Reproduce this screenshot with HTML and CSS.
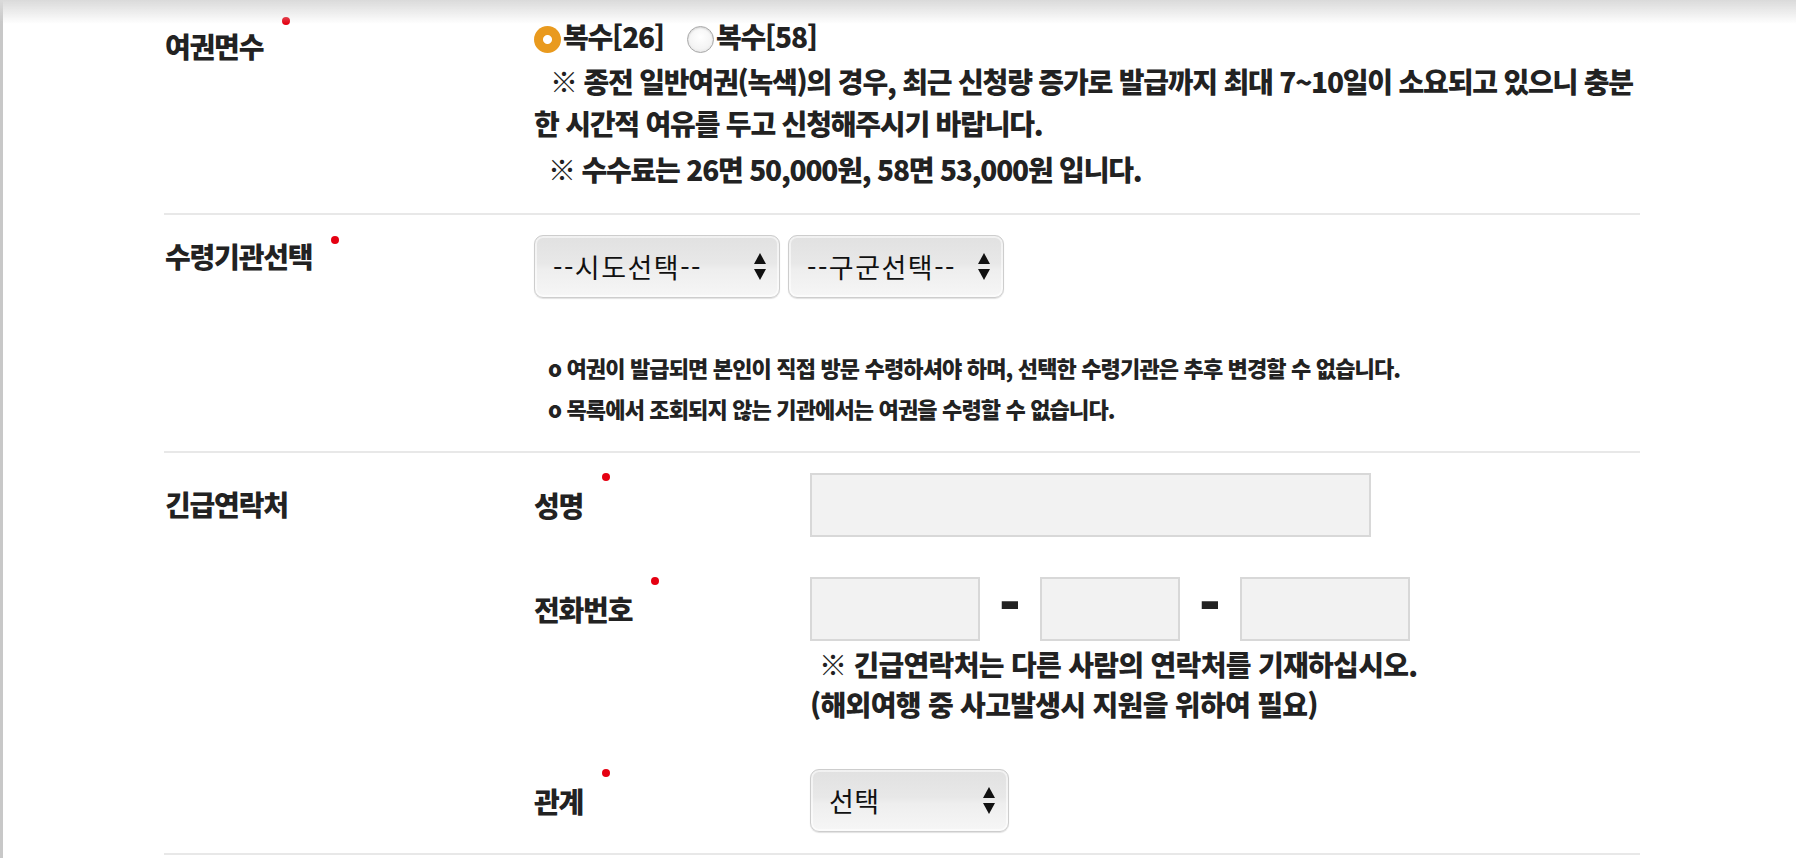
FILE: index.html
```html
<!DOCTYPE html>
<html lang="ko">
<head>
<meta charset="utf-8">
<title>여권 신청</title>
<link rel="stylesheet" href="styles.css">
</head>
<body>
<div class="topshade"></div>
<div class="page">
  <div class="form">
    <div class="row row-count">
      <div class="label"><span class="req req-count">여권면수</span></div>
      <div class="content">
        <div class="radios">
          <label class="radio"><input type="radio" name="cnt" checked><span>복수[26]</span></label>
          <label class="radio"><input type="radio" name="cnt"><span>복수[58]</span></label>
        </div>
        <p class="notice first">※ 종전 일반여권(녹색)의 경우, 최근 신청량 증가로 발급까지 최대 7~10일이 소요되고 있으니 충분<br>한 시간적 여유를 두고 신청해주시기 바랍니다.</p>
        <p class="notice fee">※ 수수료는 26면 50,000원, 58면 53,000원 입니다.</p>
      </div>
    </div>

    <div class="row row-office">
      <div class="label"><span class="req req-office">수령기관선택</span></div>
      <div class="content">
        <div class="selects">
          <div class="sel sel-sido"><select><option>--시도선택--</option></select></div>
          <div class="sel sel-gugun"><select><option>--구군선택--</option></select></div>
        </div>
        <ul class="notes">
          <li>o 여권이 발급되면 본인이 직접 방문 수령하셔야 하며, 선택한 수령기관은 추후 변경할 수 없습니다.</li>
          <li>o 목록에서 조회되지 않는 기관에서는 여권을 수령할 수 없습니다.</li>
        </ul>
      </div>
    </div>

    <div class="row row-contact">
      <div class="label label-contact">긴급연락처</div>
      <div class="content contact">
        <div class="field">
          <div class="sublabel"><span class="req">성명</span></div>
          <input class="box box-name" type="text">
        </div>
        <div class="field field-phone">
          <div class="sublabel"><span class="req">전화번호</span></div>
          <div class="phone">
            <input class="box box-p1" type="text">
            <span class="dash">-</span>
            <input class="box box-p2" type="text">
            <span class="dash">-</span>
            <input class="box box-p3" type="text">
          </div>
        </div>
        <div class="field field-note">
          <div class="sublabel"></div>
          <p class="cnotice"><span class="cl1">※ 긴급연락처는 다른 사람의 연락처를 기재하십시오.</span><br>(해외여행 중 사고발생시 지원을 위하여 필요)</p>
        </div>
        <div class="field field-rel">
          <div class="sublabel"><span class="req">관계</span></div>
          <div class="sel sel-rel"><select><option>선택</option></select></div>
        </div>
      </div>
    </div>
  </div>
</div>
</body>
</html>
```

FILE: styles.css
```css
* { box-sizing: border-box; }
html, body { margin: 0; padding: 0; background: #fff; }
body {
  font-family: "Noto Sans CJK KR", "Noto Sans", sans-serif;
  color: #222;
}
.topshade {
  position: fixed;
  top: 0; left: 0; right: 0;
  height: 24px;
  background: linear-gradient(#dadada, rgba(255,255,255,0));
  pointer-events: none;
  z-index: 5;
}
.page {
  border-left: 3px solid #c8c8c8;
  min-height: 858px;
}
.form {
  margin-left: 161px;
  width: 1476px;
}
.row {
  display: grid;
  grid-template-columns: 370px 1fr;
  border-bottom: 2px solid #e8e8e8;
}
.label, .sublabel, .radios, .notice, .cnotice {
  font-size: 28px;
  font-weight: 900;
  letter-spacing: -1.2px;
}
.label, .sublabel {
  line-height: 42px;
  padding-left: 1px;
}
.req {
  position: relative;
  display: inline-block;
}
.req::after {
  content: "";
  position: absolute;
  width: 8px;
  height: 8px;
  border-radius: 50%;
  background: #e50012;
  right: -27px;
  top: -11px;
}

/* row 1 */
.row-count { padding: 18px 0 23px; }
.row-count .label { margin-top: 7px; }
.req-count::after { top: -8px; }
.radios {
  display: flex;
  align-items: center;
  height: 42px;
}
.radio {
  display: inline-flex;
  align-items: center;
  gap: 2px;
  margin-right: 23px;
}
.radio span { position: relative; top: -3px; }
.radio input {
  -webkit-appearance: none;
  appearance: none;
  margin: 0;
  width: 27px;
  height: 27px;
  border-radius: 50%;
  border: 1px solid #a8a8a8;
  background: radial-gradient(circle at 50% 40%, #ffffff 0%, #f4f4f4 60%, #dcdcdc 100%);
  box-shadow: inset 0 1px 2px rgba(0,0,0,0.15);
}
.radio input:checked {
  border: none;
  background: radial-gradient(circle, #ffffff 0 4px, #e99a1e 5px);
  box-shadow: none;
}
.notice {
  margin: 0;
  line-height: 42px;
}
.notice.first { text-indent: 16px; white-space: nowrap; }
.notice.fee { padding-left: 14px; margin-top: 4px; }

/* row 2 */
.row-office { padding: 20px 0 22px; }
.req-office::after { top: 1px; }
.selects { display: flex; gap: 8px; }
.sel { position: relative; }
.sel select {
  -webkit-appearance: none;
  appearance: none;
  display: block;
  height: 63px;
  margin: 0;
  border: 1px solid #cdcdcd;
  border-radius: 9px;
  background: linear-gradient(#e1e1e1 0%, #e8e8e8 45%, #eeeeee 55%, #f6f6f6 100%);
  box-shadow: inset 0 0 0 2px rgba(255,255,255,0.55), 0 1px 1px rgba(0,0,0,0.12);
  font-family: "Noto Sans CJK KR", sans-serif;
  font-size: 27px;
  color: #111;
  padding: 0 0 0 18px;
  letter-spacing: 1.5px;
}
.sel::before, .sel::after {
  content: "";
  position: absolute;
  right: 14px;
  width: 0; height: 0;
  border-left: 6px solid transparent;
  border-right: 6px solid transparent;
  pointer-events: none;
}
.sel::before { top: calc(50% - 14px); border-bottom: 11px solid #111; }
.sel::after { top: calc(50% + 2px); border-top: 11px solid #111; }
.sel-sido select { width: 246px; }
.sel-gugun select { width: 216px; }
.sel-rel { justify-self: start; }
.sel-rel select { width: 199px; letter-spacing: 0.5px; }
.notes {
  list-style: none;
  margin: 49px 0 0;
  padding: 0 0 0 14px;
  font-size: 22px;
  font-weight: 900;
  letter-spacing: -0.85px;
  line-height: 41px;
}

/* row 3 */
.row-contact { padding: 20px 0 21px; }
.label-contact { padding-top: 10px; }
.field {
  display: grid;
  grid-template-columns: 276px 1fr;
  align-items: center;
}
.sublabel { padding-left: 0; }
.field-phone { margin-top: 40px; }
.field-rel { margin-top: 45px; }
.box {
  display: block;
  height: 64px;
  margin: 0;
  border: 2px solid #d8d8d8;
  background: #f2f2f2;
  font-size: 24px;
}
.box-name { width: 561px; }
.box-p1 { width: 170px; }
.box-p2 { width: 140px; }
.box-p3 { width: 170px; }
.phone { display: flex; align-items: center; }
.dash {
  width: 60px;
  text-align: center;
  font-family: "Liberation Sans", Arial, sans-serif;
  font-weight: 700;
  font-size: 64px;
  line-height: 64px;
  position: relative;
  top: -9px;
}
.cnotice {
  margin: 3px 0 0;
  line-height: 40px;
  letter-spacing: -0.7px;
}
.cl1 { padding-left: 9px; }
```
